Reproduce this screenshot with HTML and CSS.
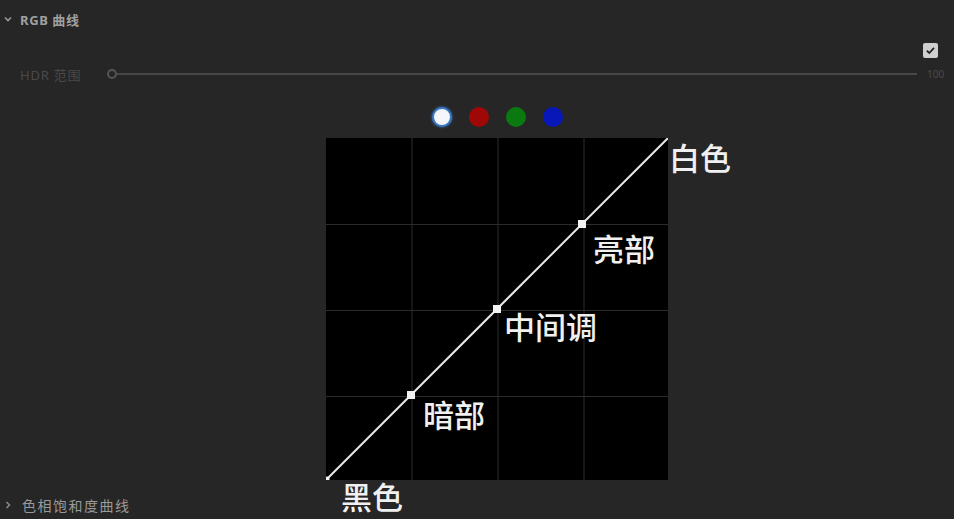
FILE: index.html
```html
<!DOCTYPE html>
<html>
<head>
<meta charset="utf-8">
<link rel="stylesheet" href="styles.css">
</head>
<body>
<div class="panel">
  <div class="sec-head">
    <svg class="chev" width="10" height="10" viewBox="0 0 10 10"><path d="M2 3.5 L5 6.5 L8 3.5" fill="none" stroke="#9a9a9a" stroke-width="1.6"/></svg>
    <span class="sec-title">RGB 曲线</span>
  </div>
  <div class="check-row">
    <div class="checkbox">
      <svg width="15" height="15" viewBox="0 0 15 15"><path d="M3.8 7.6 L6.3 10 L11 4.8" fill="none" stroke="#222" stroke-width="1.8"/></svg>
    </div>
  </div>
  <div class="hdr-row">
    <span class="hdr-label">HDR 范围</span>
    <div class="slider">
      <span class="knob"></span>
      <span class="track"></span>
    </div>
    <span class="hdr-val">100</span>
  </div>
  <div class="dots-row">
    <span class="dot dot-white"></span>
    <span class="dot dot-red"></span>
    <span class="dot dot-green"></span>
    <span class="dot dot-blue"></span>
  </div>
  <div class="curve-area">
    <div class="curve-box">
      <svg class="curve" width="342" height="342" viewBox="0 0 342 342">
        <rect x="0" y="0" width="342" height="342" fill="#000"/>
        <g stroke="#2c2c2c" stroke-width="1">
          <line x1="86" y1="0" x2="86" y2="342"/>
          <line x1="172" y1="0" x2="172" y2="342"/>
          <line x1="258" y1="0" x2="258" y2="342"/>
          <line x1="0" y1="86.5" x2="342" y2="86.5"/>
          <line x1="0" y1="172.5" x2="342" y2="172.5"/>
          <line x1="0" y1="258.5" x2="342" y2="258.5"/>
        </g>
        <line x1="0" y1="342" x2="342" y2="0" stroke="#e8e8e8" stroke-width="2"/>
        <rect x="81" y="253" width="8" height="8" fill="#f2f2f2"/>
        <rect x="167" y="167" width="8" height="8" fill="#f2f2f2"/>
        <rect x="252" y="82" width="8" height="8" fill="#f2f2f2"/>
        <circle cx="1" cy="341" r="2.5" fill="#f2f2f2"/>
      </svg>
      <span class="lbl lbl-white">白色</span>
      <span class="lbl lbl-high">亮部</span>
      <span class="lbl lbl-mid">中间调</span>
      <span class="lbl lbl-shadow">暗部</span>
      <span class="lbl lbl-black">黑色</span>
    </div>
  </div>
  <div class="sec-foot">
    <svg class="chev" width="10" height="10" viewBox="0 0 10 10"><path d="M3.5 2 L6.5 5 L3.5 8" fill="none" stroke="#8a8a8a" stroke-width="1.5"/></svg>
    <span class="foot-title">色相饱和度曲线</span>
  </div>
</div>
</body>
</html>
```
FILE: styles.css
```css
html, body {
  margin: 0;
  padding: 0;
  background: #262626;
  width: 954px;
  height: 519px;
  overflow: hidden;
  font-family: "Noto Sans", "Noto Sans CJK SC", sans-serif;
}
.panel {
  display: flex;
  flex-direction: column;
  width: 954px;
  height: 519px;
}
.sec-head {
  height: 38px;
  display: flex;
  align-items: center;
  padding-left: 3px;
  gap: 7px;
}
.sec-title {
  font-size: 13px;
  font-weight: 700;
  color: #a0a0a0;
  letter-spacing: 0.6px;
}
.check-row {
  height: 24px;
  display: flex;
  align-items: center;
  justify-content: flex-end;
  padding-right: 16px;
}
.checkbox {
  width: 15px;
  height: 15px;
  background: #cfcfcf;
  border-radius: 2px;
  display: flex;
}
.hdr-row {
  height: 24px;
  display: flex;
  align-items: center;
  padding-left: 20px;
}
.hdr-label {
  font-size: 13px;
  color: #4a4a4a;
  width: 87px;
  letter-spacing: 0.8px;
}
.slider {
  display: flex;
  align-items: center;
  width: 810px;
}
.knob {
  width: 6px;
  height: 6px;
  border: 2px solid #555;
  border-radius: 50%;
  flex: none;
}
.track {
  flex: 1;
  height: 2px;
  background: #474747;
}
.hdr-val {
  font-size: 10px;
  color: #4a4a4a;
  margin-left: 10px;
}
.dots-row {
  height: 52px;
  box-sizing: border-box;
  padding-top: 21px;
  margin-left: 326px;
  width: 342px;
  display: flex;
  justify-content: center;
  gap: 17px;
}
.dot {
  width: 20px;
  height: 20px;
  border-radius: 50%;
  box-sizing: border-box;
}
.dot-white {
  background: #f4f6fa;
  border: 2px solid #3b78c4;
  box-shadow: 0 0 3px #3b78c4;
}
.dot-red { background: #a00808; }
.dot-green { background: #0a7a10; }
.dot-blue { background: #0818b8; }
.curve-area {
  height: 342px;
  padding-left: 326px;
}
.curve-box {
  position: relative;
  width: 342px;
  height: 342px;
}
.curve { display: block; }
.lbl {
  position: absolute;
  font-family: "Noto Sans CJK SC", sans-serif;
  font-size: 31px;
  font-weight: 500;
  color: #f0f0f0;
  line-height: 1;
  white-space: nowrap;
}
.lbl-white { left: 343px; top: 3px; }
.lbl-high { left: 267px; top: 94px; }
.lbl-mid { left: 178px; top: 172px; }
.lbl-shadow { left: 97px; top: 260px; }
.lbl-black { left: 15px; top: 342px; }
.sec-foot {
  height: 39px;
  box-sizing: border-box;
  display: flex;
  align-items: center;
  padding-left: 3px;
  padding-top: 10px;
  gap: 9px;
}
.foot-title {
  font-family: "Noto Sans CJK SC", sans-serif;
  font-size: 14px;
  color: #9a9a9a;
  letter-spacing: 1.5px;
}
```
